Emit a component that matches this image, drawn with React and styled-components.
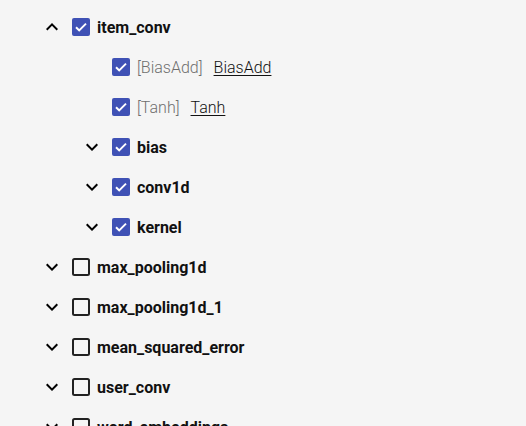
import React from 'react'
import styled, { createGlobalStyle } from 'styled-components'

const GlobalStyle = createGlobalStyle`
  html, body {
    margin: 0;
    padding: 0;
    background: #f5f5f5;
    font-family: Roboto, "Noto Sans", sans-serif;
    overflow: hidden;
  }
`

const Tree = styled.div`
  display: flex;
  flex-direction: column;
  padding: 7px 0 0 40px;
`

const Row = styled.div`
  display: flex;
  flex-direction: row;
  align-items: center;
  height: 40px;
  padding-left: ${(p) => p.$level * 40}px;
`

const Toggle = styled.span`
  display: flex;
  align-items: center;
  justify-content: center;
  width: 24px;
  height: 24px;
  margin-right: 5px;
  color: #000;
`

const Box = styled.span`
  display: flex;
  align-items: center;
  justify-content: center;
  width: 24px;
  height: 24px;
  margin-right: 4px;
`

const Name = styled.span`
  font-size: 16px;
  font-weight: 700;
  color: #111;
  white-space: nowrap;
`

const Op = styled.span`
  font-size: 16px;
  font-weight: 300;
  color: #6f6f6f;
  margin-right: 11px;
`

const Link = styled.span`
  font-size: 16px;
  font-weight: 300;
  color: #111;
  text-decoration: underline;
  text-underline-offset: 2px;
`

const Chevron = ({ up }) => (
  <svg width="24" height="24" viewBox="0 0 24 24">
    {up ? (
      <path d="M7.41 15.41 12 10.83l4.59 4.58L18 14l-6-6-6 6z" fill="#000" />
    ) : (
      <path d="M16.59 8.59 12 13.17 7.41 8.59 6 10l6 6 6-6z" fill="#000" />
    )}
  </svg>
)

const CheckIcon = ({ checked }) => (
  <svg width="24" height="24" viewBox="0 0 24 24">
    {checked ? (
      <>
        <rect x="3" y="3" width="18" height="18" rx="2" fill="#3f51b5" />
        <path d="M7 12.2l3.2 3.2L17 8.6" stroke="#fff" strokeWidth="2" fill="none" />
      </>
    ) : (
      <rect x="4" y="4" width="16" height="16" rx="1.5" fill="none" stroke="#222" strokeWidth="2" />
    )}
  </svg>
)

const rows = [
  { level: 0, name: 'item_conv', checked: true, toggle: 'up' },
  { level: 1, op: 'BiasAdd', name: 'BiasAdd', checked: true, leaf: true },
  { level: 1, op: 'Tanh', name: 'Tanh', checked: true, leaf: true },
  { level: 1, name: 'bias', checked: true, toggle: 'down' },
  { level: 1, name: 'conv1d', checked: true, toggle: 'down' },
  { level: 1, name: 'kernel', checked: true, toggle: 'down' },
  { level: 0, name: 'max_pooling1d', toggle: 'down' },
  { level: 0, name: 'max_pooling1d_1', toggle: 'down' },
  { level: 0, name: 'mean_squared_error', toggle: 'down' },
  { level: 0, name: 'user_conv', toggle: 'down' },
  { level: 0, name: 'word_embeddings', toggle: 'down' },
]

export default function App() {
  return (
    <>
      <GlobalStyle />
      <Tree>
        {rows.map((r, i) => (
          <Row key={i} $level={r.level}>
            <Toggle>{r.toggle && <Chevron up={r.toggle === 'up'} />}</Toggle>
            <Box>
              <CheckIcon checked={r.checked} />
            </Box>
            {r.leaf ? (
              <>
                <Op>[{r.op}]</Op>
                <Link>{r.name}</Link>
              </>
            ) : (
              <Name>{r.name}</Name>
            )}
          </Row>
        ))}
      </Tree>
    </>
  )
}
